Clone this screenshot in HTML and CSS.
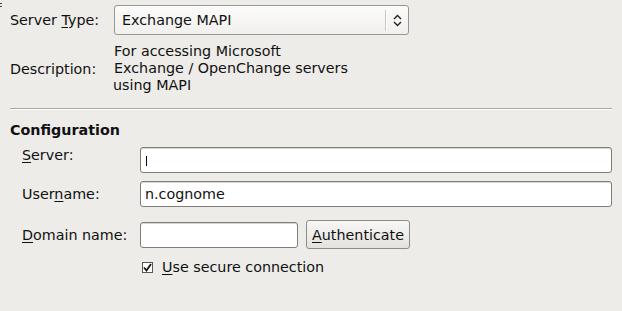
FILE: index.html
```html
<!DOCTYPE html>
<html lang="en">
  <head>
    <meta charset="UTF-8" />
    <title>Account Editor - Receiving Email</title>
    <link rel="stylesheet" href="styles.css">
  </head>
  <body>
    <div class="corner-mark"></div>

    <div class="type-section">
      <div class="type-row">
        <span class="label">Server <u>T</u>ype:</span>
        <div class="combo">
          <span class="combo-text">Exchange MAPI</span>
          <span class="combo-sep"></span>
          <svg class="combo-arrow" width="9" height="13" viewBox="0 0 9 13">
            <path d="M1 5 L4.5 1.5 L8 5 M1 8 L4.5 11.5 L8 8" fill="none" stroke="#222" stroke-width="1.4"/>
          </svg>
        </div>
      </div>

      <div class="desc-row">
        <span class="label">Description:</span>
        <div class="desc-text">
          <div>For accessing Microsoft</div>
          <div>Exchange / OpenChange servers</div>
          <div class="desc-last">using MAPI</div>
        </div>
      </div>
    </div>

    <hr class="separator">

    <div class="config">
      <div class="config-title">Configuration</div>

      <div class="field-row row-server">
        <span class="label label-top"><u>S</u>erver:</span>
        <div class="entry"><span class="cursor"></span></div>
      </div>

      <div class="field-row row-user">
        <span class="label">User<u>n</u>ame:</span>
        <div class="entry">n.cognome</div>
      </div>

      <div class="field-row row-domain">
        <span class="label"><u>D</u>omain name:</span>
        <div class="domain-group">
          <div class="entry entry-short"></div>
          <button class="button"><u>A</u>uthenticate</button>
        </div>
      </div>

      <div class="check-row">
        <span class="checkbox">
          <svg width="9" height="9" viewBox="0 0 9 9">
            <path d="M1 4.5 L3.5 7.5 L8 1" fill="none" stroke="#111" stroke-width="1.8"/>
          </svg>
        </span>
        <span><u>U</u>se secure connection</span>
      </div>
    </div>
  </body>
</html>
```

FILE: styles.css
```css
* {
  margin: 0;
  padding: 0;
  box-sizing: border-box;
}

body {
  background-color: #edece9;
  color: #111;
  font-family: "DejaVu Sans", sans-serif;
  font-size: 14.3px;
  line-height: 16px;
  width: 622px;
  height: 311px;
  overflow: hidden;
}

u {
  text-decoration: underline;
  text-underline-offset: 2px;
}

.corner-mark {
  position: absolute;
  top: 3px;
  left: 0;
  width: 2px;
  height: 4px;
  border-top: 1px solid #444;
  border-bottom: 1px solid #444;
}

/* Server type + description */
.type-section {
  padding: 5px 10px 0 10px;
}

.type-row {
  display: grid;
  grid-template-columns: 104px 295px;
  align-items: center;
}

.combo {
  height: 30px;
  display: flex;
  align-items: center;
  border: 1px solid #9a9692;
  border-radius: 3px;
  background: linear-gradient(#fbfbfa, #f1f0ee);
  padding-left: 7px;
}

.combo-text {
  flex: 1;
}

.combo-sep {
  width: 2px;
  height: 21px;
  background-color: #c9c6c2;
  border-right: 1px solid #fff;
  margin-right: 6px;
}

.combo-arrow {
  margin-right: 6px;
}

.desc-row {
  display: grid;
  grid-template-columns: 104px auto;
  align-items: center;
  margin-top: 8px;
}

.desc-text {
  line-height: 17px;
}

.desc-last {
  margin-left: -1px;
}

.separator {
  border: none;
  border-top: 1px solid #a9a7a4;
  border-bottom: 1px solid #fff;
  margin: 14px 10px 0 10px;
}

/* Configuration */
.config {
  padding: 12px 10px 0 10px;
}

.config-title {
  font-weight: bold;
}

.field-row {
  display: grid;
  grid-template-columns: 118px 472px;
  align-items: center;
  padding-left: 12px;
}

.row-server {
  margin-top: 9px;
  align-items: start;
}

.row-user {
  margin-top: 8px;
}

.row-domain {
  margin-top: 13px;
}

.entry {
  height: 26px;
  border: 1px solid #7f7c79;
  border-radius: 3px;
  background-color: #fff;
  padding: 4px 4px 0 4px;
  box-shadow: inset 0 1px 0 #d8d6d3;
}

.cursor {
  display: inline-block;
  width: 1px;
  height: 10px;
  margin: 4px 0 0 1px;
  background-color: #000;
}

.domain-group {
  display: flex;
  align-items: center;
  gap: 8px;
}

.entry-short {
  width: 158px;
}

.button {
  height: 29px;
  width: 104px;
  font-family: inherit;
  font-size: 14.3px;
  color: #111;
  border: 1px solid #8f8b87;
  border-radius: 3px;
  background: linear-gradient(#f8f7f6, #e4e2df);
}

.check-row {
  display: flex;
  align-items: center;
  margin: 10px 0 0 132px;
  gap: 9px;
}

.checkbox {
  width: 11px;
  height: 11px;
  border: 1px solid #5a5856;
  background-color: #fff;
  display: flex;
  align-items: center;
  justify-content: center;
}
```
